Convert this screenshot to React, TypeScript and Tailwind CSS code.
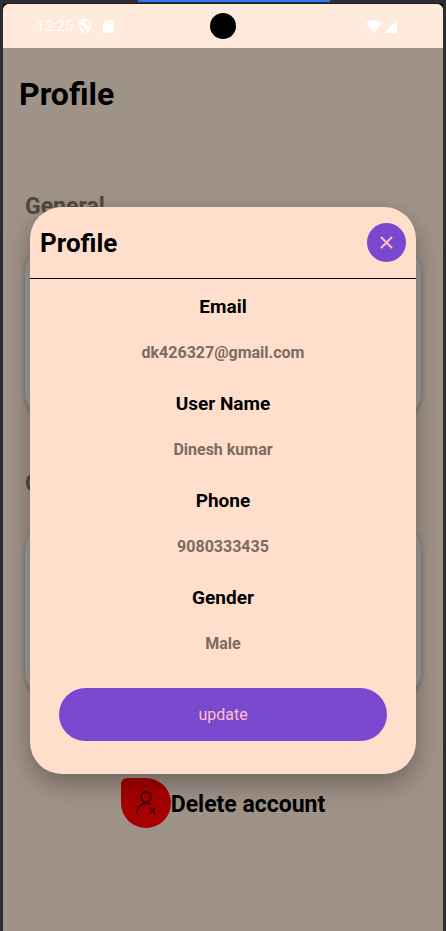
import React from "react";

const details = [
  { label: "Email", value: "dk426327@gmail.com" },
  { label: "User Name", value: "Dinesh kumar" },
  { label: "Phone", value: "9080333435" },
  { label: "Gender", value: "Male" },
];

function StatusBar() {
  return (
    <header className="relative flex h-11 items-center justify-between bg-[#ffeadc] pr-[46px] pl-[33px] text-white">
      <div className="flex items-center">
        <span className="w-[43px] text-[15px] leading-5">12:25</span>
        <svg className="h-4 w-3" viewBox="0 0 12 16" fill="none" stroke="currentColor" strokeWidth="1.5" aria-hidden="true">
          <path d="M6 1.300 11.200 3.300v4.200c0 3.300-2 5.800-5.200 7.200-3.200-1.400-5.200-3.900-5.200-7.200V3.300L6 1.300Z" />
          <path d="M1.500 3.500 9 12.500M5 2v3.200c2 1.300 4 2.300 4 4.800" />
        </svg>
        <svg className="ml-3 h-[13px] w-[11px]" viewBox="0 0 11 13" aria-hidden="true">
          <path fill="currentColor" d="M4 0h6a1 1 0 0 1 1 1v11a1 1 0 0 1-1 1H1a1 1 0 0 1-1-1V4Z" />
          <path stroke="#ffeadc" strokeWidth=".6" d="M4.500 1.500v2.500M6.500 1.500v2.500M8.500 1.500v2.500" />
        </svg>
      </div>
      <div className="absolute top-[9px] left-1/2 size-[26px] -translate-x-1/2 rounded-full bg-black" />
      <div className="flex items-center gap-[2px]">
        <svg className="h-[13px] w-4" viewBox="0 0 16 13" fill="currentColor" aria-hidden="true">
          <path d="M0 3.500C4-1 12-1 16 3.500L8 13Z" />
        </svg>
        <svg className="size-[13px]" viewBox="0 0 13 13" fill="currentColor" aria-hidden="true">
          <path d="M13 0v13H0Z" />
        </svg>
      </div>
    </header>
  );
}

function ProfileDialog() {
  return (
    <section
      role="dialog"
      aria-labelledby="dialog-title"
      className="absolute inset-x-[27px] top-[203px] rounded-[32px] bg-[#ffdfcc] pb-[33px] shadow-[0_10px_24px_rgba(0,0,0,0.3)]"
    >
      <div className="flex h-[72px] items-center justify-between border-b border-black pr-[10px] pl-[10px]">
        <h2 id="dialog-title" className="text-[26px] leading-8 font-bold">Profile</h2>
        <button type="button" aria-label="Close" className="flex size-[39px] items-center justify-center rounded-full bg-[#7b48d0] text-[#ffc0cb]">
          <svg className="size-[13px]" viewBox="0 0 13 13" fill="none" stroke="currentColor" strokeWidth="2" strokeLinecap="round" aria-hidden="true">
            <path d="m1.500 1.500 10 10M11.500 1.500l-10 10" />
          </svg>
        </button>
      </div>
      <dl className="pt-4 text-center">
        {details.map((item) => (
          <div key={item.label} className="h-[97px]">
            <dt className="text-[19px] leading-6 font-bold">{item.label}</dt>
            <dd className="pt-6 text-base leading-5 font-bold text-[#7c6b61]">{item.value}</dd>
          </div>
        ))}
      </dl>
      <div className="px-[29px] pt-[5px]">
        <button type="button" className="h-[53px] w-full rounded-full bg-[#7b48d0] text-base text-[#ffc0cb]">update</button>
      </div>
    </section>
  );
}

export default function App() {
  return (
    <div className="min-h-screen bg-[#2b2d33] px-[3px] font-['Roboto','Liberation_Sans',sans-serif] text-black">
      <div className="flex h-1 flex-col items-center border-b border-[#1e1f22] pl-[22px]">
        <div className="h-[2px] w-48 bg-[#3574f0]" />
      </div>
      <div className="bg-black">
        <div className="relative min-h-[calc(100vh-4px)] overflow-hidden rounded-t-md bg-[#9f9287]">
          <StatusBar />
          <main>
            <h1 className="px-4 pt-[26px] text-[32px] leading-10 font-bold">Profile</h1>
            <h2 className="px-[22px] pt-[77px] text-[23px] leading-8 font-bold text-[#4f4843]">General</h2>
            <div className="mx-[22px] mt-5 h-[179px] rounded-[30px] bg-[#9b9b9b] shadow-[0_2px_5px_rgba(0,0,0,0.25)]" />
            <h2 className="px-[22px] pt-[46px] text-[23px] leading-8 font-bold text-[#4f4843]">Others</h2>
            <div className="mx-[22px] mt-5 h-[181px] rounded-[30px] bg-[#9b9b9b] shadow-[0_2px_5px_rgba(0,0,0,0.25)]" />
            <button type="button" className="mx-auto mt-[77px] flex items-center text-[23px] leading-8 font-bold">
              <span className="flex size-[50px] items-center justify-center rounded-[25px] rounded-tl-md bg-[#a60000] text-[#4a0000]">
                <svg className="size-6" viewBox="0 0 24 24" fill="none" stroke="currentColor" strokeWidth="1.800" aria-hidden="true">
                  <circle cx="12" cy="6" r="5" />
                  <path d="M2.500 23C2.500 17 6.500 12.500 12 12.500c2 0 3.500.400 5 1.200" />
                  <path d="m15.500 17 5.500 5.500M21 17l-5.500 5.500" />
                </svg>
              </span>
              <span className="pt-1">Delete account</span>
            </button>
          </main>
          <ProfileDialog />
        </div>
      </div>
    </div>
  );
}
